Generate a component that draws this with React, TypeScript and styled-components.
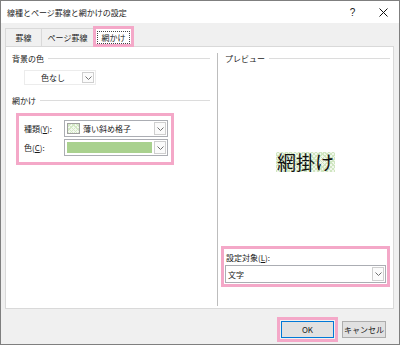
import styled, { createGlobalStyle } from "styled-components";

const pink = "#f4a8c8";

const GlobalStyle = createGlobalStyle`
  html, body {
    margin: 0;
    padding: 0;
    background: #fff;
  }
  body {
    font-family: "Noto Sans CJK JP", "Noto Sans", sans-serif;
    color: #1a1a1a;
  }
  * {
    box-sizing: border-box;
  }
`;

const Window = styled.div`
  width: 400px;
  height: 345px;
  border: 1px solid #7f7f7f;
  display: flex;
  flex-direction: column;
  background: #f0f0f0;
`;

const TitleBar = styled.div`
  height: 22px;
  background: #fff;
  display: flex;
  align-items: center;
  padding-left: 6px;
  font-size: 8px;
`;

const Title = styled.div`
  flex: 1;
`;

const TitleButton = styled.div`
  width: 31px;
  height: 22px;
  display: flex;
  align-items: center;
  justify-content: center;
  font-size: 10px;
  font-family: "Liberation Sans", sans-serif;
`;

const Body = styled.div`
  flex: 1;
  display: flex;
  flex-direction: column;
  padding: 5px 5px 0 4px;
`;

const TabRow = styled.div`
  display: flex;
  height: 18px;
  position: relative;
  z-index: 1;
`;

const Tab = styled.div<{ $w: number; $first?: boolean }>`
  width: ${(p) => p.$w}px;
  height: 18px;
  border: 1px solid #d9d9d9;
  border-bottom: none;
  border-left: ${(p) => (p.$first ? "1px solid #d9d9d9" : "none")};
  display: flex;
  align-items: center;
  justify-content: center;
  font-size: 8px;
`;

const ActiveTab = styled.div`
  width: 41px;
  height: 21px;
  margin: -2px 0 0 -1px;
  border: 3px solid ${pink};
  background: #fff;
  padding: 2px 1px 0 1px;
  display: flex;
`;

const FocusRect = styled.div`
  flex: 1;
  height: 13px;
  border: 1px dotted #444;
  display: flex;
  align-items: center;
  justify-content: center;
  font-size: 8px;
`;

const Panel = styled.div`
  height: 263px;
  border: 1px solid #d9d9d9;
  background: #fff;
  display: grid;
  grid-template-columns: 211px 1fr;
`;

const LeftCol = styled.div`
  display: flex;
  flex-direction: column;
  padding: 6px 7px 0 6px;
`;

const GroupHeader = styled.div<{ $gap?: number }>`
  display: flex;
  align-items: center;
  gap: 4px;
  height: 11px;
  font-size: 8px;
  margin-top: ${(p) => p.$gap ?? 0}px;

  &::after {
    content: "";
    flex: 1;
    border-top: 1px solid #dcdcdc;
  }
`;

const ColorButton = styled.div`
  margin: 6px 0 0 12px;
  width: 72px;
  height: 15px;
  display: flex;
  border: 1px solid #ececec;
`;

const ColorLabel = styled.div`
  flex: 1;
  display: flex;
  align-items: center;
  justify-content: center;
  font-size: 8px;
`;

const PinkBox = styled.div`
  border: 3px solid ${pink};
`;

const ShadingBox = styled(PinkBox)`
  margin: 7px 0 0 4px;
  width: 158px;
  padding: 4px 3px 6px 5px;
  display: grid;
  grid-template-columns: 40px 1fr;
  row-gap: 2px;
  align-items: center;
`;

const FieldLabel = styled.div`
  font-size: 8px;
`;

const Combo = styled.div<{ $h?: number }>`
  height: ${(p) => p.$h ?? 17}px;
  border: 1px solid #abadb3;
  background: #fff;
  display: flex;
  align-items: center;
  font-size: 8px;
`;

const ComboValue = styled.div`
  flex: 1;
  display: flex;
  align-items: center;
  gap: 3px;
  padding-left: 2px;
  height: 100%;
`;

const ArrowBox = styled.div`
  width: 12px;
  align-self: stretch;
  margin: 1px;
  border: 1px solid #cfcfcf;
  background: #fbfbfb;
  display: flex;
  align-items: center;
  justify-content: center;
`;

const Swatch = styled.div`
  width: 13px;
  height: 11px;
  border: 1px solid #a0a0a0;
  background-color: #f3f8ef;
  background-image: repeating-linear-gradient(45deg, #d3e8c5 0 1px, transparent 1px 3px),
    repeating-linear-gradient(-45deg, #d3e8c5 0 1px, transparent 1px 3px);
`;

const ColorBar = styled.div`
  flex: 1;
  height: 11px;
  margin-right: 1px;
  background: #a9d18e;
`;

const PreviewFrame = styled.div`
  margin: 6px 0 2px 0;
  border-left: 1px solid #bdbdbd;
  display: flex;
  flex-direction: column;
  padding: 0 3px 19px 3px;
`;

const PreviewHeader = styled(GroupHeader)`
  padding-left: 4px;
`;

const PreviewArea = styled.div`
  flex: 1;
  display: flex;
  align-items: center;
  justify-content: center;
  padding-top: 14px;
`;

const Sample = styled.span`
  font-size: 19px;
  line-height: 20px;
  padding: 0 1px;
  color: #111;
  background-color: #f1f7ec;
  background-image: repeating-linear-gradient(45deg, #d0e6c1 0 1px, transparent 1px 3px),
    repeating-linear-gradient(-45deg, #d0e6c1 0 1px, transparent 1px 3px);
`;

const TargetBox = styled(PinkBox)`
  display: flex;
  flex-direction: column;
  gap: 2px;
  padding: 2px 1px 1px 1px;
`;

const TargetLabel = styled.div`
  height: 12px;
  padding-left: 1px;
  font-size: 8px;
  display: flex;
  align-items: center;
`;

const ButtonRow = styled.div`
  display: flex;
  justify-content: flex-end;
  align-items: center;
  gap: 4px;
  padding: 8px 8px 0 0;
`;

const DefaultWrap = styled(PinkBox)`
  padding: 1px;
`;

const Button = styled.div<{ $w: number; $default?: boolean }>`
  width: ${(p) => p.$w}px;
  height: 17px;
  background: #e1e1e1;
  border: 1px solid ${(p) => (p.$default ? "#0078d7" : "#adadad")};
  display: flex;
  align-items: center;
  justify-content: center;
  font-size: 8px;
`;

const Chevron = () => (
  <svg width="7" height="4" viewBox="0 0 7 4">
    <polyline points="0.5,0.5 3.5,3.5 6.5,0.5" fill="none" stroke="#707070" strokeWidth="1" />
  </svg>
);

const CloseIcon = () => (
  <svg width="9" height="9" viewBox="0 0 9 9">
    <path d="M0.5 0.5 L8.5 8.5 M8.5 0.5 L0.5 8.5" stroke="#111" strokeWidth="1" />
  </svg>
);

const App = () => {
  return (
    <>
      <GlobalStyle />
      <Window>
        <TitleBar>
          <Title>線種とページ罫線と網かけの設定</Title>
          <TitleButton>?</TitleButton>
          <TitleButton>
            <CloseIcon />
          </TitleButton>
        </TitleBar>

        <Body>
          <TabRow>
            <Tab $w={37} $first>
              罫線
            </Tab>
            <Tab $w={52}>ページ罫線</Tab>
            <ActiveTab>
              <FocusRect>網かけ</FocusRect>
            </ActiveTab>
          </TabRow>

          <Panel>
            <LeftCol>
              <GroupHeader>背景の色</GroupHeader>
              <ColorButton>
                <ColorLabel>色なし</ColorLabel>
                <ArrowBox>
                  <Chevron />
                </ArrowBox>
              </ColorButton>

              <GroupHeader $gap={10}>網かけ</GroupHeader>
              <ShadingBox>
                <FieldLabel>
                  種類(<u>Y</u>):
                </FieldLabel>
                <Combo>
                  <ComboValue>
                    <Swatch />
                    薄い斜め格子
                  </ComboValue>
                  <ArrowBox>
                    <Chevron />
                  </ArrowBox>
                </Combo>
                <FieldLabel>
                  色(<u>C</u>):
                </FieldLabel>
                <Combo>
                  <ComboValue>
                    <ColorBar />
                  </ComboValue>
                  <ArrowBox>
                    <Chevron />
                  </ArrowBox>
                </Combo>
              </ShadingBox>
            </LeftCol>

            <PreviewFrame>
              <PreviewHeader>プレビュー</PreviewHeader>
              <PreviewArea>
                <Sample>網掛け</Sample>
              </PreviewArea>
              <TargetBox>
                <TargetLabel>
                  設定対象(<u>L</u>):
                </TargetLabel>
                <Combo $h={18}>
                  <ComboValue>文字</ComboValue>
                  <ArrowBox>
                    <Chevron />
                  </ArrowBox>
                </Combo>
              </TargetBox>
            </PreviewFrame>
          </Panel>

          <ButtonRow>
            <DefaultWrap>
              <Button $w={53} $default>
                OK
              </Button>
            </DefaultWrap>
            <Button $w={44}>キャンセル</Button>
          </ButtonRow>
        </Body>
      </Window>
    </>
  );
};

export default App;
